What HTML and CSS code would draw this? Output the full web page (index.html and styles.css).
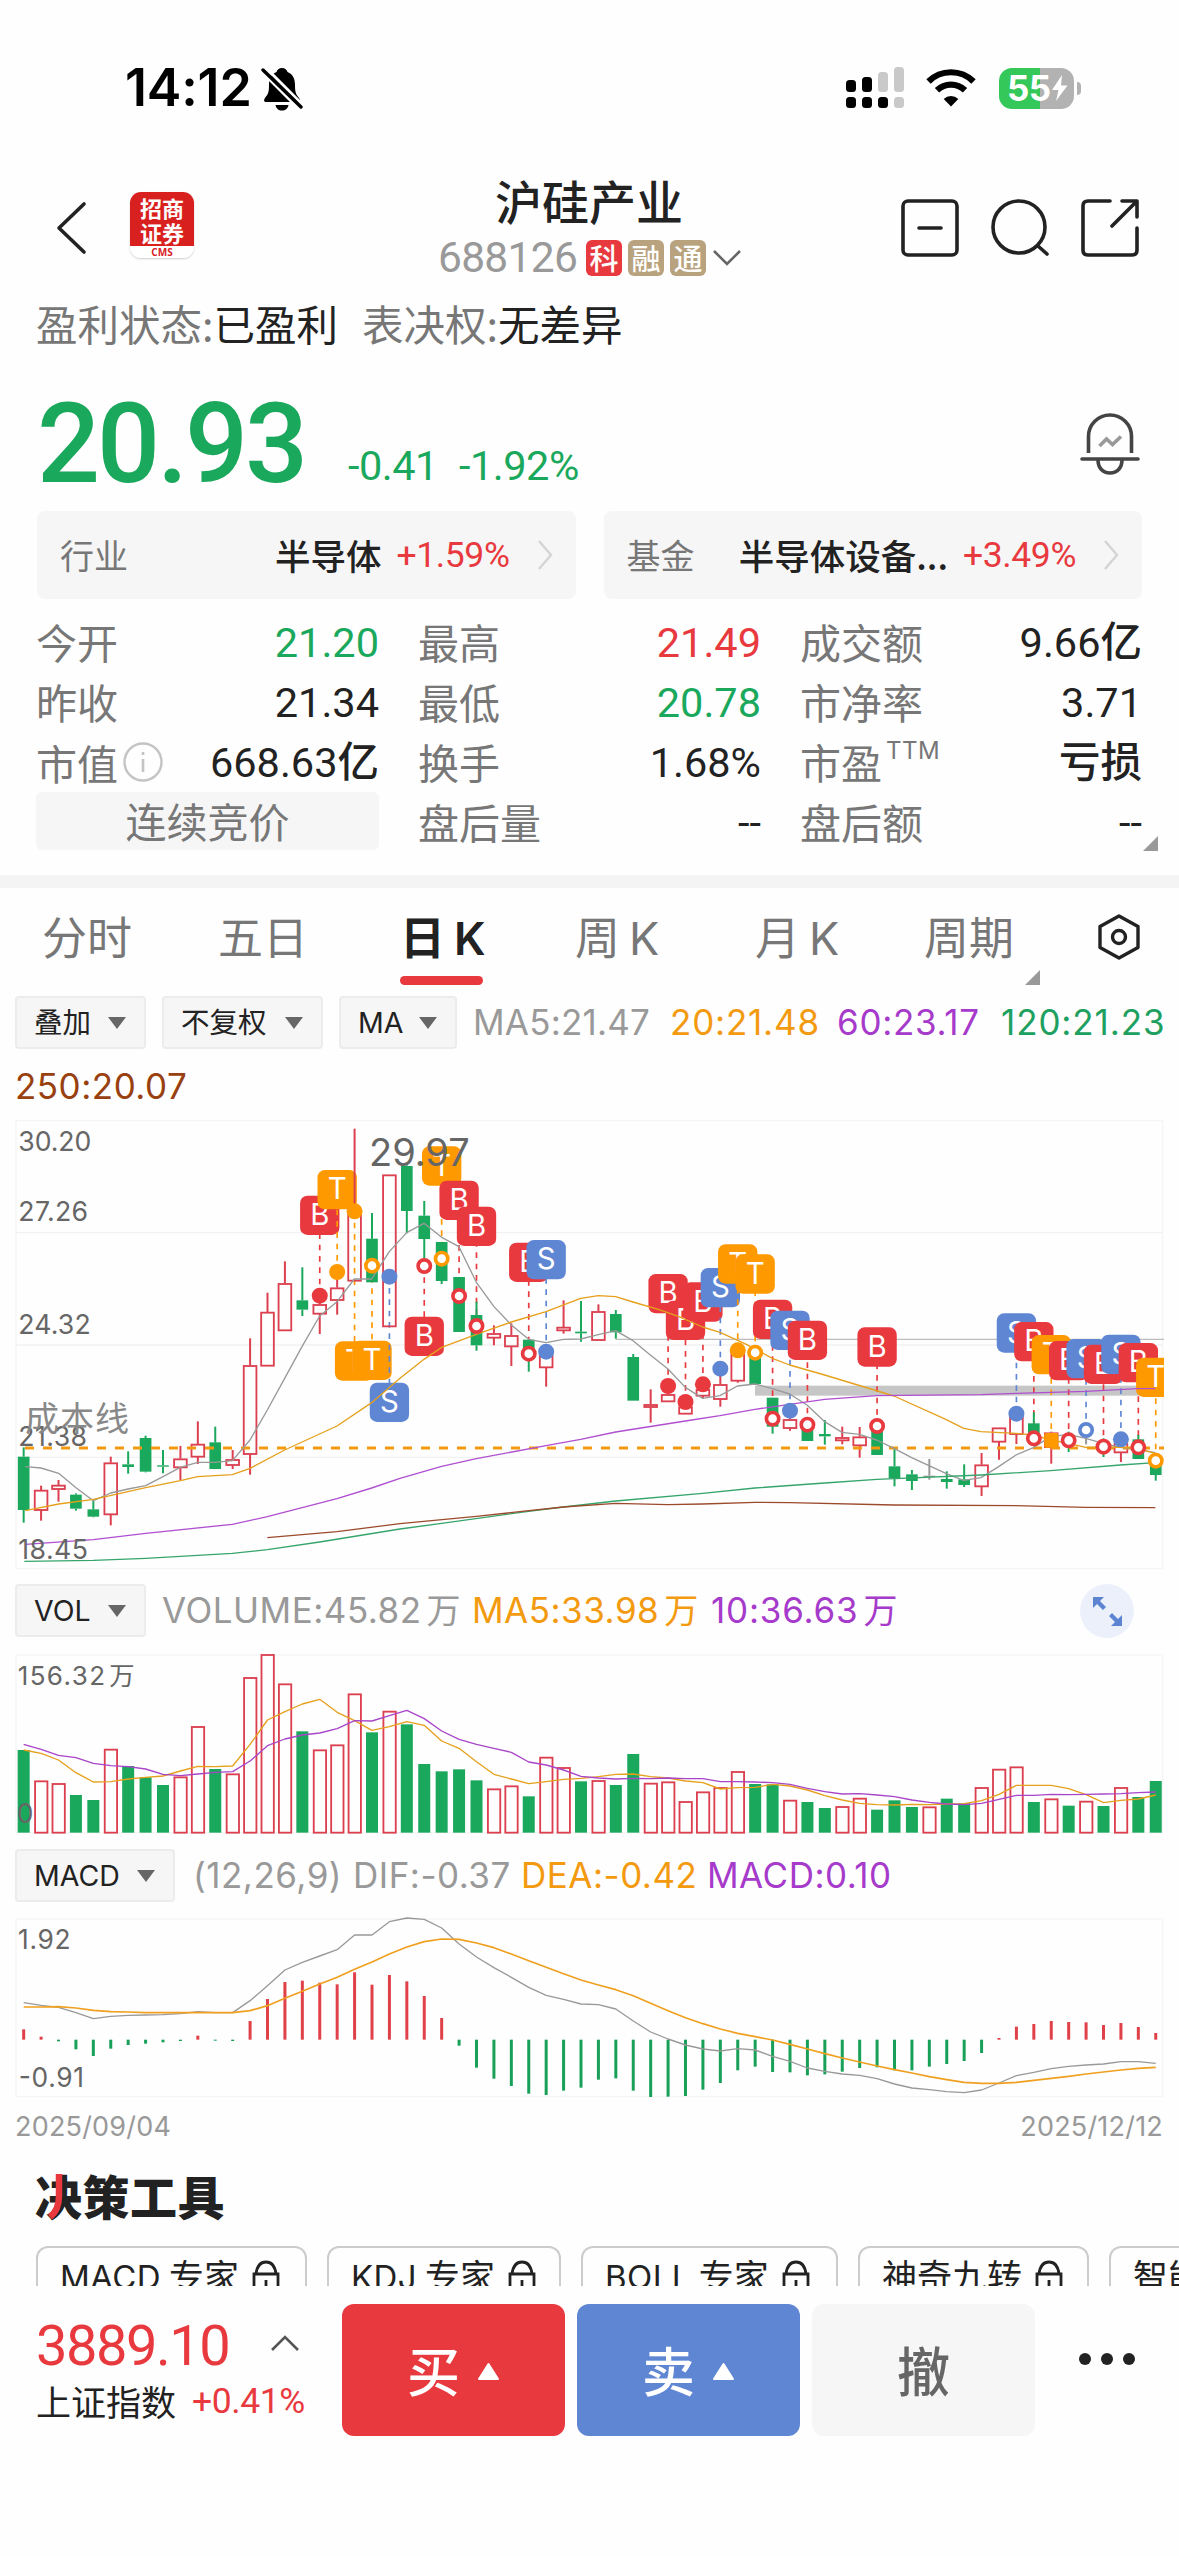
FILE: index.html
```html
<!DOCTYPE html>
<html lang="zh-CN">
<head>
<meta charset="utf-8">
<title>沪硅产业 688126</title>
<link rel="stylesheet" href="styles.css">
</head>
<body>
<div class="screen">
  <header class="status">
    <div class="status-left">
      <span class="clock">14:12</span>
      <svg class="mute" width="42" height="46" viewBox="0 0 42 46">
        <path d="M21 2c-3 0-5 2-5.500 4C10 8 8 13 8 19c0 8-1 9-4 13-1.500 2-1 4 1 4h32c2 0 2.500-2 1-4-3-4-4-5-4-13 0-6-2-11-7.500-13C26 4 24 2 21 2zM14.500 39h13c-.5 3.500-3 5.500-6.500 5.500s-6-2-6.500-5.500z" fill="#000"/>
        <path d="M4 1l38 38" stroke="#fff" stroke-width="3"/>
        <path d="M1 6l38 38" stroke="#fff" stroke-width="3"/>
        <path d="M2 4l38 37" stroke="#000" stroke-width="3.400" stroke-linecap="round"/>
      </svg>
    </div>
    <div class="status-right">
      <svg width="60" height="44" viewBox="0 0 60 44">
        <g fill="#000"><rect x="1" y="14" width="10" height="12" rx="3.500"/><rect x="17" y="11" width="10" height="15" rx="3.500"/><rect x="1" y="31" width="10" height="11" rx="3.500"/><rect x="17" y="31" width="10" height="11" rx="3.500"/><rect x="33" y="31" width="10" height="11" rx="3.500"/></g>
        <g fill="#c9c9c9"><rect x="33" y="6" width="10" height="20" rx="3.500"/><rect x="49" y="1" width="10" height="25" rx="3.500"/><rect x="49" y="31" width="10" height="11" rx="3.500"/></g>
      </svg>
      <svg class="wifi" width="50" height="38" viewBox="0 0 50 38">
        <g fill="none" stroke="#000" stroke-width="6.200"><path d="M2.500 12.500a32 32 0 0 1 45 0"/><path d="M11 21.300a20 20 0 0 1 28 0"/></g>
        <path d="M25 37.500l-7.300-7.600a10.500 10.500 0 0 1 14.600 0z" fill="#000"/>
      </svg>
      <div class="battery"><span>55</span><svg width="17" height="26" viewBox="0 0 17 26"><path d="M11 0L1 15h6.500L5 26 16.500 10.500H10z" fill="#fff"/></svg></div>
      <i class="battery-cap"></i>
    </div>
  </header>

  <nav class="nav">
    <svg class="back" width="32" height="56" viewBox="0 0 32 56"><path d="M28 4L3 28l25 24" fill="none" stroke="#222" stroke-width="3.600" stroke-linecap="round" stroke-linejoin="round"/></svg>
    <div class="broker"><b>招商</b><b>证券</b><em>CMS</em></div>
    <div class="stock">
      <div class="stock-name">沪硅产业</div>
      <div class="stock-code"><span>688126</span><i class="tag red">科</i><i class="tag">融</i><i class="tag">通</i>
        <svg width="30" height="18" viewBox="0 0 30 18"><path d="M2 2l13 13L28 2" fill="none" stroke="#666" stroke-width="2.600"/></svg></div>
    </div>
    <svg class="nav-icons" width="242" height="64" viewBox="0 0 242 64">
      <g fill="none" stroke="#222" stroke-width="3.600" stroke-linecap="round" stroke-linejoin="round">
        <rect x="4" y="4" width="54" height="54" rx="5"/><path d="M20 31h22"/>
        <circle cx="120" cy="30" r="26"/><path d="M139 49l9 8"/>
        <path d="M211 4h-22q-5 0-5 5v44q0 5 5 5h44q5 0 5-5V31M223 4h15v16M237 5l-24 24"/>
      </g>
    </svg>
  </nav>

  <div class="meta"><span>盈利状态:<b>已盈利</b></span><span>表决权:<b>无差异</b></span></div>

  <section class="price-row">
    <span class="price">20.93</span><span class="chg">-0.41</span><span class="pct">-1.92%</span>
    <svg class="alert" width="64" height="64" viewBox="0 0 64 64">
      <g fill="none" stroke="#444" stroke-width="3.600" stroke-linecap="round"><path d="M10.500 41V24.500a21.500 21.500 0 0 1 43 0V41" stroke-linecap="butt"/><path d="M4 47h56M20 48c0 8 5 13 12 13s12-5 12-13"/></g>
      <path d="M21.500 34l7-7 6 5.500 8.500-8" fill="none" stroke="#999" stroke-width="3.600"/>
    </svg>
  </section>

  <section class="cards">
    <div class="card"><span class="label">行业</span><b>半导体</b><span class="up">+1.59%</span><svg width="16" height="32" viewBox="0 0 16 32"><path d="M2 2l12 14L2 30" fill="none" stroke="#d4d4d4" stroke-width="2.400"/></svg></div>
    <div class="card"><span class="label">基金</span><b>半导体设备<span class="dots">...</span></b><span class="up">+3.49%</span><svg width="16" height="32" viewBox="0 0 16 32"><path d="M2 2l12 14L2 30" fill="none" stroke="#d4d4d4" stroke-width="2.400"/></svg></div>
  </section>

  <section class="quotes">
    <div><span>今开</span><b class="down">21.20</b></div><div><span>最高</span><b class="up">21.49</b></div><div><span>成交额</span><b>9.66亿</b></div>
    <div><span>昨收</span><b>21.34</b></div><div><span>最低</span><b class="down">20.78</b></div><div><span>市净率</span><b>3.71</b></div>
    <div><span class="with-info">市值<svg width="42" height="42" viewBox="0 0 42 42"><circle cx="21" cy="21" r="18.500" fill="none" stroke="#c4c4c4" stroke-width="2.400"/><path d="M21 18v13M21 11v3" stroke="#c4c4c4" stroke-width="2.600"/></svg></span><b>668.63亿</b></div><div><span>换手</span><b>1.68%</b></div><div><span>市盈<sup>TTM</sup></span><b>亏损</b></div>
    <div class="phase">连续竞价</div><div><span>盘后量</span><b>--</b></div><div><span>盘后额</span><b>--</b><i class="corner"></i></div>
  </section>

  <div class="divider"></div>

  <nav class="tabs">
    <span class="t1">分时</span><span class="t2">五日</span><span class="t3 on">日<u>K</u></span><span class="t4">周<u>K</u></span><span class="t5">月<u>K</u></span><span class="t6">周期<i class="corner"></i></span>
    <svg width="44" height="48" viewBox="0 0 44 48"><g fill="none" stroke="#222" stroke-width="3.400" stroke-linejoin="round"><path d="M22 3l19 10.500v21L22 45 3 34.500v-21z"/><circle cx="22" cy="24" r="6.500"/></g></svg>
  </nav>

  <div class="indicators main-ind">
    <span class="pick w1">叠加<i></i></span><span class="pick w2">不复权<i></i></span><span class="pick w3">MA<i></i></span>
    <span class="v gray ma5">MA5:21.47</span><span class="v orange ma20">20:21.48</span><span class="v purple ma60">60:23.17</span><span class="v green ma120">120:21.23</span>
  </div>
  <div class="ma250">250:20.07</div>
  <svg id="kline" class="chart" width="1179" height="465" viewBox="0 0 3537 1395"></svg>

  <div class="indicators vol-ind">
    <span class="pick w4">VOL<i></i></span>
    <span class="v gray vol-now">VOLUME:45.82<s>万</s></span><span class="v orange vol-5">MA5:33.98<s>万</s></span><span class="v purple vol-10">10:36.63<s>万</s></span>
    <svg class="expand" width="56" height="56" viewBox="0 0 56 56"><circle cx="28" cy="28" r="27" fill="#ebf0fa"/><path d="M14 14h11l-4 4 6 6-3 3-6-6-4 4zM43 43H32l4-4-6-6 3-3 6 6 4-4z" fill="#5c84d1"/></svg>
  </div>
  <svg id="volume" class="chart" width="1179" height="200" viewBox="0 0 3537 600"></svg>

  <div class="indicators macd-ind">
    <span class="pick w5">MACD<i></i></span>
    <span class="v gray m-args">(12,26,9)</span><span class="v gray m-dif">DIF:-0.37</span><span class="v orange m-dea">DEA:-0.42</span><span class="v purple">MACD:0.10</span>
  </div>
  <svg id="macd" class="chart" width="1179" height="200" viewBox="0 0 3537 600"></svg>
  <div class="dates"><span>2025/09/04</span><span>2025/12/12</span></div>

  <h2 class="tools-title">决策工具<svg width="30" height="50" viewBox="0 0 30 50"><path d="M19 3v22q0 14-9 21" fill="none" stroke="#e8393f" stroke-width="6.500"/></svg></h2>
  <div class="tools">
    <span class="chip c1"><em>MACD</em>专家<svg class="lock"><use href="#lock"/></svg></span>
    <span class="chip c2"><em>KDJ</em>专家<svg class="lock"><use href="#lock"/></svg></span>
    <span class="chip c3"><em>BOLL</em>专家<svg class="lock"><use href="#lock"/></svg></span>
    <span class="chip c4">神奇九转<svg class="lock"><use href="#lock"/></svg></span>
    <span class="chip c5">智能选股</span>
  </div>

  <footer class="trade">
    <div class="index">
      <div class="index-top"><span>3889.10</span><svg width="30" height="18" viewBox="0 0 30 18"><path d="M2 16L15 3l13 13" fill="none" stroke="#555" stroke-width="2.600"/></svg></div>
      <div class="index-sub"><span>上证指数</span><span class="up">+0.41%</span></div>
    </div>
    <div class="btn buy">买<svg width="23" height="19" viewBox="0 0 23 19"><path d="M11.500 2L21 17H2z" fill="#fff" stroke="#fff" stroke-width="2" stroke-linejoin="round"/></svg></div>
    <div class="btn sell">卖<svg width="23" height="19" viewBox="0 0 23 19"><path d="M11.500 2L21 17H2z" fill="#fff" stroke="#fff" stroke-width="2" stroke-linejoin="round"/></svg></div>
    <div class="btn cancel">撤</div>
    <svg class="more" width="60" height="14" viewBox="0 0 60 14"><circle cx="8" cy="7" r="6"/><circle cx="30" cy="7" r="6"/><circle cx="52" cy="7" r="6"/></svg>
  </footer>
</div>
<svg width="0" height="0" class="defs"><symbol id="lock" viewBox="0 0 28 34"><g fill="none" stroke="#222" stroke-width="2.800"><path d="M2 34V14h24v20"/><path d="M4 14C5 6 8 2 14 2s9 4 10 12M14 20v8"/></g></symbol></svg>
<script src="charts.js"></script>
</body>
</html>
```
FILE: styles.css
```css
* { box-sizing: border-box; }
body { margin: 0; background: #fefefe; color: #222; font-family: Inter, "Noto Sans CJK SC", sans-serif; }
.screen { width: 1179px; height: 2556px; display: flex; flex-direction: column; overflow: hidden; }
.screen > * { flex: none; }
svg { display: block; flex: none; }
i, em { font-style: normal; }
.up { color: #e8393f !important; }
.down { color: #1aa85c !important; }
.defs { display: none; }

.status { height: 150px; padding: 65px 98px 0 125px; display: flex; justify-content: space-between; }
.status-left, .status-right { display: flex; height: 46px; align-items: center; }
.clock { font-weight: 600; font-size: 52px; line-height: 46px; letter-spacing: -.2px; color: #000; width: 136px; white-space: nowrap; }
.mute { margin-top: 1px; }
.wifi { margin: 0 23px 0 21px; }
.battery { width: 75px; height: 41px; border-radius: 13px; background: linear-gradient(90deg, #34c759 41px, #b2b2b2 41px); display: flex; align-items: center; padding-left: 8px; color: #fff; }
.battery span { font-size: 35px; font-weight: 700; line-height: 41px; letter-spacing: -.5px; width: 44px; }
.battery-cap { width: 4px; height: 13px; margin-left: 3px; border-radius: 0 4px 4px 0; background: #b2b2b2; }

.nav { height: 141px; display: flex; padding-left: 56px; }
.back { margin-top: 50px; }
.broker { width: 64px; height: 66px; margin: 42px 0 0 42px; border-radius: 11px; overflow: hidden; background: linear-gradient(#d8201f 54px, #fff 54px); box-shadow: 0 1px 2px #ccc; text-align: center; color: #fff; padding-top: 3px; }
.broker b { display: block; height: 25px; font: 700 22px/25px "Noto Sans CJK SC", sans-serif; }
.broker em { display: block; font: 700 10px/14px "Open Sans", sans-serif; color: #d8201f; }
.stock { width: 304px; margin: 20px 0 0 244px; }
.stock-name { font: 500 47px/60px "Noto Sans CJK SC", sans-serif; text-align: center; width: 302px; }
.stock-code { display: flex; align-items: center; height: 40px; margin-top: 8px; }
.stock-code > span { font: 400 42.500px/40px Roboto, sans-serif; color: #999; letter-spacing: -.7px; width: 148px; }
.tag { width: 36px; height: 36px; margin-right: 6px; border-radius: 6px; background: #b9a27e; color: #fff; font: 500 29px/35px "Noto Sans CJK SC", sans-serif; text-align: center; }
.tag.red { background: #e8393f; }
.nav-icons { margin: 47px 0 0 157px; }

.meta { height: 69px; padding-left: 36px; display: flex; gap: 24px; font: 400 41.500px/64px "Noto Sans CJK SC", sans-serif; color: #777; }
.meta b { font-weight: 400; color: #222; }

.price-row { height: 151px; padding-left: 37px; display: flex; font-family: Roboto, sans-serif; font-weight: 500; color: #1aa85c; }
.price { width: 311px; font-size: 111px; line-height: 168px; letter-spacing: -3px; }
.chg, .pct { font-size: 41.500px; font-weight: 450; line-height: 211px; height: 151px; width: 111px; letter-spacing: -.5px; white-space: nowrap; }
.pct { width: 619px; }
.alert { margin-top: 52px; }

.cards { display: flex; gap: 28px; padding: 0 37px; height: 88px; }
.card { width: 538.500px; border-radius: 8px; background: #f6f6f6; display: flex; align-items: center; padding: 0 23px 0 23px; font: 400 34px/50px "Noto Sans CJK SC", sans-serif; }
.card .label { color: #777; margin-right: auto; }
.card b { font-weight: 500; font-size: 35.500px; }
.card .dots { letter-spacing: 0; }
.card .up { font: 450 35.500px/50px Roboto, sans-serif; letter-spacing: -.4px; margin: 0 27px 0 15px; }

.quotes { height: 276px; padding: 13px 37px 0 36px; display: grid; grid-template-columns: 343px 343px 342px; grid-auto-rows: 60px; column-gap: 39px; font: 400 41px/60px "Noto Sans CJK SC", sans-serif; }
.quotes > div { display: flex; justify-content: space-between; position: relative; }
.quotes span { color: #777; white-space: nowrap; line-height: 59px; }
.quotes b { font: 450 41.500px/61px Roboto, "Noto Sans CJK SC", sans-serif; white-space: nowrap; }
.with-info { display: flex; align-items: center; gap: 4px; }
.quotes sup { font: 400 24px/20px Inter, sans-serif; vertical-align: 20px; margin-left: 4px; letter-spacing: .5px; }
.quotes .phase { height: 58px; background: #f6f6f6; border-radius: 6px; justify-content: center; color: #777; line-height: 57px; }
.corner { position: absolute; width: 0; height: 0; border-left: 15px solid transparent; border-bottom: 15px solid #999; }
.quotes .corner { left: 343px; top: 44px; }

.divider { height: 13px; background: #f4f4f4; }
.tabs { height: 108px; display: flex; position: relative; font: 400 45px/96px "Noto Sans CJK SC", sans-serif; color: #777; padding-left: 42px; }
.tabs u { text-decoration: none; margin-left: 9px; font-family: Inter, sans-serif; }
.tabs span { position: relative; white-space: nowrap; }
.t1 { width: 176px; } .t2 { width: 182px; } .t3 { width: 175px; } .t4 { width: 180px; } .t5 { width: 169px; } .t6 { width: 173px; }
.tabs .on { color: #222; font-weight: 700; }
.tabs .on u { font-weight: 600; }
.tabs .on::after { content: ""; position: absolute; left: 0; top: 88px; width: 83px; height: 9px; border-radius: 5px; background: #e8393f; }
.tabs .corner { left: 101px; top: 82px; }
.tabs svg { margin-top: 25px; }

.indicators { display: flex; padding-left: 15px; height: 53px; line-height: 53px; }
.indicators > * { flex: none; }
.pick { height: 53px; border: 2px solid #ececec; border-radius: 4px; background: #f6f6f6; font-size: 28.500px; line-height: 49px; padding: 0 18px 0 17px; display: flex; justify-content: space-between; align-items: center; margin-right: 16px; }
.pick i { border: 9px solid transparent; border-top: 12px solid #666; border-bottom: 0; }
.w1 { width: 131px; } .w2 { width: 161px; } .w3 { width: 118px; } .w4 { width: 131px; } .w5 { width: 160px; }
.v { font-size: 35px; letter-spacing: .5px; white-space: nowrap; }
.v s { text-decoration: none; font-size: 34px; margin-left: 5px; }
.ma5 { width: 197px; letter-spacing: .2px; } .ma20 { width: 167px; letter-spacing: .8px; } .ma60 { width: 164px; letter-spacing: .7px; } .ma120 { width: 170px; letter-spacing: .9px; }
.gray { color: #999; } .orange { color: #f39a10; } .purple { color: #a63acb; } .green { color: #20a060; }
.ma250 { height: 61px; padding-left: 15px; font-size: 35px; line-height: 75px; letter-spacing: .5px; color: #994010; }
.vol-ind { height: 61px; margin-top: 9px; }
.vol-now { width: 310px; } .vol-5 { width: 239px; } .vol-10 { width: 368px; letter-spacing: .8px; }
.expand { margin: -1px 0 0; }
.macd-ind { margin-top: 4px; height: 61px; }
.m-args { width: 160px; } .m-dif { width: 168px; } .m-dea { width: 186px; }
.macd-ind .pick { margin-right: 18px; }
.chart text { font-family: Inter, "Noto Sans CJK SC", sans-serif; }

.dates { display: flex; justify-content: space-between; height: 50px; padding: 0 16px 0 15px; font-size: 27px; line-height: 34px; letter-spacing: .2px; color: #999; }
.tools-title { position: relative; margin: 0; height: 86px; padding-left: 35px; font: 900 47px/70px "Noto Sans CJK SC", sans-serif; letter-spacing: .5px; }
.tools-title svg { position: absolute; left: 40px; top: 11px; }
.tools { display: flex; gap: 20px; height: 40px; padding-left: 36px; overflow: hidden; }
.chip { flex: none; height: 62px; border: 2px solid #ccc; border-radius: 12px; font: 400 35px/53px "Noto Sans CJK SC", sans-serif; display: flex; padding-left: 22px; white-space: nowrap; }
.chip em { font-family: Inter, sans-serif; font-size: 33px; line-height: 59px; letter-spacing: .4px; margin-right: 8px; }
.lock { width: 28px; height: 34px; margin: 12px 0 0 13px; }
.c1 { width: 271px; } .c2 { width: 234px; } .c3 { width: 257px; } .c4 { width: 231px; } .c5 { width: 240px; }

.trade { display: flex; height: 270px; padding: 18px 0 0 36px; }
.index { width: 306px; }
.index-top { display: flex; height: 68px; font: 400 56px/85px Roboto, sans-serif; letter-spacing: -1.500px; color: #e8393f; }
.index-top span { width: 234px; }
.index-top svg { margin-top: 30px; }
.index-sub { display: flex; gap: 16px; font: 400 35px/57px "Noto Sans CJK SC", sans-serif; }
.index-sub .up { font: 450 35.500px/59px Roboto, sans-serif; letter-spacing: -.4px; }
.btn { width: 223px; height: 132px; border-radius: 12px; margin-right: 12px; color: #fff; display: flex; align-items: center; justify-content: center; gap: 17px; font: 500 53px/128px "Noto Sans CJK SC", sans-serif; padding-bottom: 3px; }
.btn svg { margin-top: 5px; }
.buy { background: #e8393f; } .sell { background: #5f86d3; } .cancel { background: #f6f6f6; color: #666; }
.more { margin: 48px 0 0 30px; fill: #222; }
```
FILE: charts.js
```javascript
const STEP = 52.25, X0 = 71, RED = '#dc4050', GREEN = '#1aa85c';
const COLORS = { B: '#e8393f', S: '#5f86d3', T: '#ff9900' };
const x = i => X0 + STEP * i;
const rect = (l, t, w, h, a) => `<rect x="${l}" y="${t}" width="${w}" height="${h}" ${a}/>`;
const line = (x1, y1, x2, y2, c, w, a = '') => `<line x1="${x1}" y1="${y1}" x2="${x2}" y2="${y2}" stroke="${c}" stroke-width="${w}" ${a}/>`;
const poly = (pts, c, w = 4) => `<polyline points="${pts}" fill="none" stroke="${c}" stroke-width="${w}" stroke-linejoin="round"/>`;
const series = (ys, off, c, w) => poly(ys.map((y, i) => `${x(i)},${y - off}`).join(' '), c, w);
const text = (l, b, s, size, c, w) => `<text x="${l}" y="${b}" font-size="${size}" fill="${c}" ${w ? `textLength="${w}"` : ''}>${s}</text>`;
const frame = (t, b) => rect(48, t, 3440, b - t, 'fill="none" stroke="#f5f5f5" stroke-width="4"');

// high, body top, body bottom, low, colour
const candles = [
[1012,1040,1200,1238,'g'],[1127,1140,1201,1232,'r'],[1110,1125,1138,1175,'r'],[1150,1154,1196,1202,'g'],[1172,1198,1220,1222,'g'],
[1040,1058,1214,1246,'r'],[1024,1063,1071,1091,'g'],[977,984,1085,1087,'g'],[1020,1066,1070,1090,'g'],[1008,1046,1073,1110,'r'],
[934,1002,1041,1062,'r'],[950,997,1077,1077,'g'],[1020,1048,1066,1077,'r'],[685,766,1033,1094,'r'],[548,606,768,768,'r'],
[454,520,662,662,'r'],[472,571,599,618,'g'],[560,583,612,672,'r'],[505,533,571,614,'r'],[56,305,513,513,'r'],
[309,386,517,517,'g'],[194,194,650,650,'r'],[166,168,303,370,'g'],[273,317,387,460,'g'],[396,396,513,522,'g'],
[501,501,666,666,'g'],[575,615,706,722,'g'],[646,670,684,706,'r'],[640,676,710,768,'r'],[689,689,745,785,'g'],
[720,735,773,830,'r'],[571,651,662,671,'r'],[573,665,670,695,'g'],[583,604,691,691,'r'],[600,612,667,686,'g'],
[732,741,872,872,'g'],[838,883,892,938,'r'],[820,853,875,875,'r'],[870,890,912,912,'r'],[825,838,858,866,'r'],
[780,823,868,890,'r'],[710,725,813,818,'r'],[720,735,822,822,'g'],[863,863,950,971,'g'],[920,928,955,962,'r'],
[940,950,993,993,'g'],[930,972,979,1004,'g'],[950,982,992,1003,'r'],[951,980,1007,1043,'r'],[940,955,1035,1035,'g'],
[1013,1069,1105,1129,'g'],[1080,1093,1113,1140,'g'],[1047,1097,1101,1109,'n'],[1084,1107,1116,1136,'g'],[1063,1108,1125,1131,'g'],
[1029,1064,1130,1158,'r'],[953,953,996,1049,'r'],[900,920,973,1002,'r'],[907,940,985,990,'g'],[965,968,1012,1061,'r'],
[965,985,1000,1026,'g'],[955,958,962,1003,'n'],[985,1000,1020,1041,'g'],[985,1000,1028,1056,'r'],[975,988,1047,1047,'g'],[1040,1050,1095,1112,'g']];

// index, side, badge centre, dot centre, filled
const marks = [
[17,'B',316,557,1],[18,'T',239,486,1],[19,'T',753,304,1],[20,'T',751,467,0],[21,'S',877,500,1],[23,'B',679,468,0],
[24,'T',168,446,0],[25,'B',271,558,0],[26,'B',349,648,0],[29,'B',457,731,0],[30,'S',449,725,1],[37,'B',551,828,1],
[38,'B',631,876,1],[39,'B',576,823,1],[40,'S',533,776,1],[41,'T',462,721,1],[42,'T',492,728,0],[43,'B',628,926,0],
[44,'S',661,902,1],[45,'B',691,944,0],[49,'B',711,948,0],[57,'S',669,911,1],[58,'B',695,985,0],[59,'T',734,991,1],
[60,'B',752,991,0],[61,'S',746,960,0],[62,'B',763,1010,0],[63,'S',733,988,1],[64,'B',758,1012,0],[65,'T',802,1052,0]];

const ma = {
'#999999': '76,1070 123,1074 176,1090 228,1133 280,1172 332,1149 384,1137 437,1127 489,1100 541,1072 593,1057 645,1057 697,1052 750,990 802,900 854,805 906,710 959,618 1011,575 1063,507 1115,507 1168,425 1220,368 1272,340 1325,382 1377,410 1429,517 1482,590 1534,645 1586,688 1638,698 1690,688 1742,687 1795,674 1847,662 1899,692 1951,735 2004,777 2056,832 2108,865 2160,857 2212,828 2265,822 2317,836 2369,852 2421,885 2474,935 2526,967 2578,973 2630,990 2682,1015 2735,1043 2787,1067 2839,1091 2891,1111 2943,1103 2996,1070 3048,1035 3100,1013 3152,980 3205,973 3257,985 3309,1000 3361,1012 3413,1018 3466,1028',
'#e5a01c': '76,1202 176,1182 280,1168 437,1133 541,1112 593,1100 697,1094 750,1075 854,1020 1011,948 1115,878 1200,805 1272,748 1325,712 1429,673 1534,636 1638,605 1742,565 1795,557 1847,560 1899,576 1977,599 2035,619 2108,651 2160,667 2239,703 2317,745 2369,765 2474,795 2682,858 2839,929 2891,955 2943,965 3048,970 3100,975 3152,990 3205,1000 3257,1012 3361,1012 3413,1016 3466,1030',
'#b04fd0': '76,1303 280,1289 437,1270 697,1243 802,1220 1011,1166 1115,1134 1200,1105 1325,1069 1429,1046 1638,1007 1742,988 1847,966 2056,933 2160,917 2265,898 2369,883 2474,868 2630,857 2943,854 3048,850 3257,844 3413,836 3466,836',
'#35a56c': '73,1354 280,1351 437,1345 697,1330 802,1319 959,1296 1200,1257 1325,1240 1586,1204 1690,1191 1847,1173 2108,1150 2265,1134 2474,1119 2630,1108 2943,1095 3152,1082 3361,1065 3466,1058',
'#9c4a2c': '802,1283 1011,1265 1200,1241 1429,1219 1690,1191 1847,1180 2004,1184 2108,1182 2265,1177 2370,1178 2682,1185 3048,1187 3257,1192 3466,1193'
};

function drawKline() {
  let s = '<clipPath id="plot"><rect x="0" y="0" width="3492" height="1395"/></clipPath><g clip-path="url(#plot)">' + frame(32, 1376);
  for (const y of [368, 705, 1042]) s += line(48, y, 3488, y, '#f2f2f2', 4);
  s += line(1847, 688, 3492, 688, '#bdbdbd', 4) + rect(2265, 827, 1227, 30, 'fill="#c6c6c6"');
  for (const [i, k, by, dy] of marks) {
    s += line(x(i), dy, x(i), by, COLORS[k], 5, 'stroke-dasharray="17 17"');
    s += rect(x(i) - 59, by - 59, 118, 118, `rx="22" fill="${COLORS[k]}"`);
    s += `<text x="${x(i)}" y="${by + 29}" font-size="88" fill="#fff" text-anchor="middle">${k}</text>`;
  }
  candles.forEach(([h, t, b, l, k], i) => {
    const c = { g: GREEN, r: RED, n: '#999' }[k];
    s += line(x(i), h, x(i), t, c, 6) + line(x(i), b, x(i), l, c, 6);
    s += k === 'r' ? rect(x(i) - 19, t + 2, 38, b - t - 3, `fill="none" stroke="${c}" stroke-width="5.500"`)
                   : rect(x(i) - 17.500, t, 35, b - t, `fill="${c}"`);
  });
  s += line(75, 1014, 3492, 1014, '#f39a10', 9, 'stroke-dasharray="27 27"');
  for (const c in ma) s += poly(ma[c], c);
  for (const [i, k, , dy, full] of marks) {
    if (i === 59) s += rect(x(i) - 21, dy - 22, 42, 44, 'rx="6" fill="#ff9900"');
    else s += full ? `<circle cx="${x(i)}" cy="${dy}" r="24" fill="${COLORS[k]}"/>`
                   : `<circle cx="${x(i)}" cy="${dy}" r="18.500" fill="#fff" stroke="${COLORS[k]}" stroke-width="11"/>`;
  }
  s += '</g>';
  [['30.20', 123, 219], ['27.26', 333, 209], ['24.32', 672, 217], ['21.38', 1008, 206], ['18.45', 1347, 209]]
    .forEach(([t, y, w]) => s += text(55, y, t, 80, '#666', w));
  s += text(75, 964, '成本线', 102, '#888', 312) + text(1107, 167, '29.97', 114, '#666', 302);
  document.getElementById('kline').innerHTML = s;
}

const vol = [540,-632,-640,675,690,-537,588,622,645,-620,-469,597,-611,-322,-253,-341,484,-539,-524,-371,487,-423,463,582,604,598,631,-656,-647,679,-561,-592,634,-631,645,552,-639,-635,-694,-665,-652,-604,642,643,-690,696,714,-709,-684,719,691,711,-710,686,700,-652,-597,-590,696,-686,707,-693,708,-652,681,633];
const vol5 = [540,550,570,608,636,635,627,622,618,603,589,590,588,523,450,425,402,388,427,452,481,470,455,466,513,535,575,613,627,641,635,628,625,620,613,612,620,624,633,638,657,653,652,643,648,660,677,690,700,704,705,703,704,702,701,692,673,646,646,646,656,674,698,691,687,675];
const vol10 = [523,538,556,563,580,587,590,597,613,617,612,607,605,573,527,507,495,489,476,452,453,437,421,446,483,508,523,535,547,576,585,600,619,624,627,625,626,624,626,626,635,635,636,638,643,655,665,672,671,675,680,690,697,702,704,700,688,676,676,673,674,673,672,671,668,666];

function drawVolume() {
  let s = frame(30, 563);
  vol.forEach((v, i) => {
    const t = Math.abs(v) - 225;
    s += v < 0 ? rect(x(i) - 18, t + 2, 37, 561 - t, `fill="none" stroke="${RED}" stroke-width="5.500"`)
               : rect(x(i) - 18, t, 36, 563 - t, `fill="${GREEN}"`);
  });
  s += series(vol5, 225, '#e5a01c') + series(vol10, 225, '#a845c8');
  s += text(53, 121, '156.32', 78, '#666', 262) + text(328, 121, '万', 76, '#666') + text(50, 535, '0', 79, '#666');
  document.getElementById('volume').innerHTML = s;
}

const hist = [538,560,574,598,618,596,585,581,577,573,557,572,573,513,447,396,392,398,403,367,404,375,394,438,504,587,653,686,708,731,735,722,713,689,685,722,741,740,738,719,699,661,650,666,667,676,673,665,654,652,661,661,650,642,633,609,564,530,522,513,516,517,525,519,531,549];
const dif = [458,466,472,488,506,499,496,495,494,491,485,488,488,452,407,360,337,318,299,255,255,215,204,208,234,282,321,353,382,412,436,448,462,464,477,513,546,567,585,597,603,596,600,619,634,654,664,672,676,686,702,714,719,725,728,720,699,677,667,656,649,645,642,635,635,640];
const dea = [471,471,470,474,481,485,486,488,488,488,488,488,488,482,467,445,424,402,382,358,336,312,291,275,267,268,279,293,312,332,352,371,390,405,419,437,460,482,503,521,537,550,560,570,583,597,611,624,636,648,659,669,680,689,697,700,700,697,691,685,679,672,666,660,655,652];

function drawMacd() {
  let s = frame(27, 560);
  hist.forEach((y, i) => s += line(x(i), 389, x(i), y - 180, y < 568 ? '#e04048' : '#18a058', 9));
  s += series(dif, 180, '#999') + series(dea, 180, '#f0a020', 5);
  s += text(54, 117, '1.92', 79, '#666', 158) + text(56, 531, '-0.91', 79, '#666', 196);
  document.getElementById('macd').innerHTML = s;
}

drawKline();
drawVolume();
drawMacd();
```
